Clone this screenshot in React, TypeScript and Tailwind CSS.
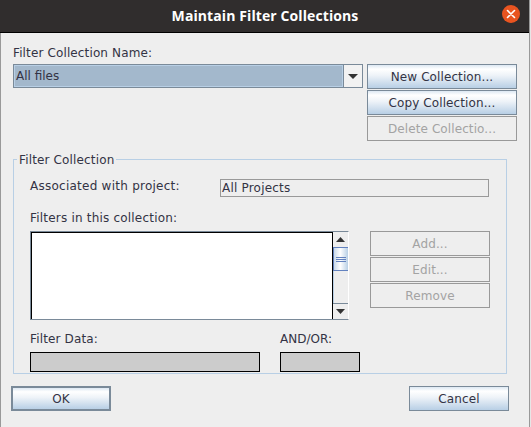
const font = "[font-family:'DejaVu_Sans',sans-serif]";

const oceanFill = "bg-[linear-gradient(180deg,#dde8f3_0%,#ffffff_18%,#eef3f8_45%,#b8cfe5_100%)]";

function SwingButton({ label, className = "", focused = false }: { label: string; className?: string; focused?: boolean }) {
  return (
    <div
      className={`flex h-[25px] items-center justify-center text-[12px] tracking-[0.1px] text-[#333344] ${oceanFill} ${
        focused ? "border-2 border-[#7a8a99]" : "border border-[#7a8a99]"
      } ${className}`}
    >
      {label}
    </div>
  );
}

function DisabledButton({ label, className = "" }: { label: string; className?: string }) {
  return (
    <div className={`flex h-[25px] items-center justify-center border border-[#999999] text-[12px] tracking-[0.1px] text-[#a3a3a3] ${className}`}>
      {label}
    </div>
  );
}

function ArrowUp() {
  return (
    <svg width="9" height="5" viewBox="0 0 9 5">
      <path d="M4.5 0 L9 5 L0 5 Z" fill="#333333" />
    </svg>
  );
}

function ArrowDown({ w = 9, h = 5 }: { w?: number; h?: number }) {
  return (
    <svg width={w} height={h} viewBox={`0 0 ${w} ${h}`}>
      <path d={`M0 0 L${w} 0 L${w / 2} ${h} Z`} fill="#333333" />
    </svg>
  );
}

function ScrollBar() {
  return (
    <div className="flex w-[15px] flex-col bg-[#eeeeee]">
      <div className="flex h-[15px] shrink-0 items-center justify-center">
        <ArrowUp />
      </div>
      <div className="flex h-[24px] shrink-0 flex-col items-center justify-center gap-px border-y border-l border-[#6382bf] bg-[linear-gradient(90deg,#c8d8ea_0%,#ffffff_45%,#b8cfe5_100%)]">
        <div className="h-px w-[10px] bg-[#6382bf]" />
        <div className="h-px w-[10px] bg-[#6382bf]" />
        <div className="h-px w-[10px] bg-[#6382bf]" />
      </div>
      <div className="flex-1 border-l border-[#b8cfe5]" />
      <div className="flex h-[16px] shrink-0 items-center justify-center border-t border-[#7a8a99]">
        <ArrowDown />
      </div>
    </div>
  );
}

export default function App() {
  return (
    <div className={`flex h-[427px] w-[531px] overflow-hidden bg-[#e6e6e6] text-[12px] text-[#333344] ${font}`}>
      <div className="flex w-[530px] flex-col border-r border-[#999999] bg-[#eeeeee]">
        <div className="flex h-[33px] shrink-0 items-center border-b border-black bg-[#302d2d] pr-[9px] pl-[1px]">
          <div className="mb-[2px] flex-1 pl-[27px] text-center font-['Open_Sans',sans-serif] text-[14px] font-bold tracking-[0.1px] text-white">
            Maintain Filter Collections
          </div>
          <div className="mb-[4px] flex h-[18px] w-[18px] items-center justify-center rounded-full bg-[#e95420]">
            <svg width="10" height="10" viewBox="0 0 10 10">
              <path d="M1.5 1.5 L8.5 8.5 M8.5 1.5 L1.5 8.5" stroke="#ffffff" strokeWidth="1.6" strokeLinecap="round" />
            </svg>
          </div>
        </div>

        <div className="flex min-h-0 flex-1 border-l border-[#999999]">
          <div className="flex flex-1 flex-col pl-[10px]">
            <div className="flex pt-[10px] pl-[2px]">
              <div className="w-[350px]">
                <div className="h-[21px] pt-[1px] leading-[18px] tracking-[0.13px]">Filter Collection Name:</div>
                <div className="flex h-[24px] border border-[#7a8a99] bg-[#eeeeee]">
                  <div className="flex flex-1 items-center border border-[#b8cfe5] bg-[#a3b8cc] pl-[1px]">All files</div>
                  <div className="flex w-[19px] items-center justify-center border-l border-[#7a8a99] bg-[#f2f2f2]">
                    <ArrowDown w={10} h={5} />
                  </div>
                </div>
              </div>
              <div className="mt-[21px] ml-[4px] flex w-[150px] flex-col gap-px">
                <SwingButton label="New Collection..." />
                <SwingButton label="Copy Collection..." />
                <DisabledButton label="Delete Collectio..." />
              </div>
            </div>

            <div className="relative mt-[18px] ml-[2px] h-[215px] w-[494px] border border-[#b8cfe5] pl-[16px]">
              <div className="absolute top-[-9px] left-[3px] bg-[#eeeeee] px-[2px] leading-[18px] tracking-[0.15px]">Filter Collection</div>
              <div className="flex h-[37px] items-start justify-between pt-[17px] pr-[17px]">
                <span className="leading-[18px] tracking-[0.25px]">Associated with project:</span>
                <div className="mt-[2px] flex h-[18px] w-[269px] items-center border border-[#999999] pl-[1px] tracking-[0.2px]">All Projects</div>
              </div>
              <div className="mt-[12px] h-[22px] leading-[18px] tracking-[0.2px]">Filters in this collection:</div>
              <div className="flex items-start">
                <div className="flex h-[89px] w-[319px] border border-[#7a8a99] border-r-white">
                  <div className="flex-1 border-x border-t border-black bg-white" />
                  <ScrollBar />
                </div>
                <div className="ml-[21px] flex w-[120px] flex-col gap-px">
                  <DisabledButton label="Add..." />
                  <DisabledButton label="Edit..." />
                  <DisabledButton label="Remove" />
                </div>
              </div>
              <div className="mt-[10px] flex gap-[20px]">
                <div>
                  <div className="h-[22px] leading-[18px] tracking-[0.15px]">Filter Data:</div>
                  <div className="h-[20px] w-[230px] border border-black bg-[#cccccc]" />
                </div>
                <div>
                  <div className="h-[22px] leading-[18px]">AND/OR:</div>
                  <div className="h-[20px] w-[80px] border border-black bg-[#cccccc]" />
                </div>
              </div>
            </div>

            <div className="mt-[12px] flex justify-between pr-[20px]">
              <SwingButton label="OK" focused className="w-[100px]" />
              <SwingButton label="Cancel" className="w-[100px]" />
            </div>
          </div>
        </div>
      </div>
    </div>
  );
}
